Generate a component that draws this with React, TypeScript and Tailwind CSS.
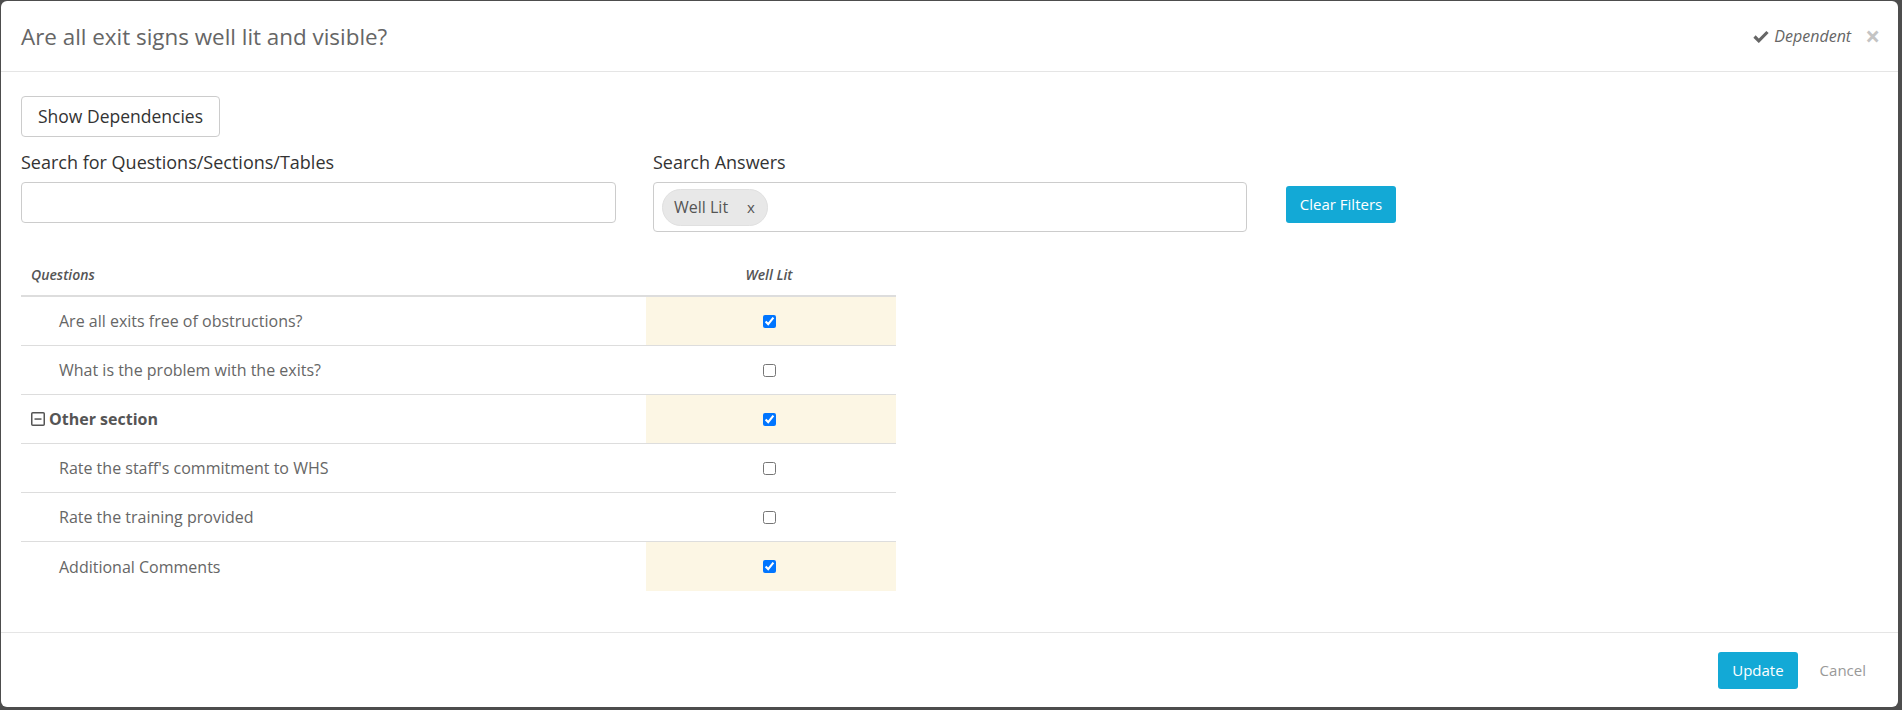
import { useState } from "react";

type Row = { label: string; checked: boolean; section?: boolean };

const rows: Row[] = [
  { label: "Are all exits free of obstructions?", checked: true },
  { label: "What is the problem with the exits?", checked: false },
  { label: "Other section", checked: true, section: true },
  { label: "Rate the staff's commitment to WHS", checked: false },
  { label: "Rate the training provided", checked: false },
  { label: "Additional Comments", checked: true },
];

export default function App() {
  const [items, setItems] = useState(rows);

  const toggle = (i: number) => {
    setItems(items.map((r, idx) => (idx === i ? { ...r, checked: !r.checked } : r)));
  };

  return (
    <div className="min-h-[710px] bg-[#4d4d4d] pt-[1px] pl-[1px] font-['Open_Sans',sans-serif]">
      <div className="w-[1897px] h-[706px] bg-white rounded-[6px] flex flex-col">
        {/* header */}
        <div className="h-[71px] border-b border-[#e5e5e5] flex items-center justify-between pl-[20px] pr-[18px] shrink-0">
          <h4 className="text-[22.4px] text-[#666] mt-[2px]">Are all exit signs well lit and visible?</h4>
          <div className="flex items-center gap-[14px]">
            <span className="flex items-center gap-[5px] text-[16px] italic text-[#666]">
              <svg width="16" height="13" viewBox="0 0 16 13">
                <path d="M1.5 6.5 L5.8 10.8 L14.5 2" fill="none" stroke="#666" strokeWidth="3.2" />
              </svg>
              Dependent
            </span>
            <span className="text-[26px] leading-none text-[#c4c4c4] font-bold">×</span>
          </div>
        </div>

        {/* body */}
        <div className="flex-1 px-[20px] pt-[24px]">
          <button className="h-[41px] px-[16px] border border-[#ccc] rounded-[4px] text-[17.5px] text-[#333] bg-white">
            Show Dependencies
          </button>

          <div className="flex items-start mt-[12px]">
            <div className="w-[595px]">
              <label className="block text-[18px] text-[#333] leading-[26px] mb-[7px]">
                Search for Questions/Sections/Tables
              </label>
              <input className="w-full h-[41px] border border-[#ccc] rounded-[4px] px-3 outline-none" />
            </div>
            <div className="w-[594px] ml-[37px]">
              <label className="block text-[18px] text-[#333] leading-[26px] mb-[7px]">Search Answers</label>
              <div className="h-[50px] border border-[#ccc] rounded-[4px] flex items-center px-[8px]">
                <span className="h-[37px] rounded-full bg-[#e8e8e8] border border-[#e0e0e0] flex items-center pl-[11px] pr-[12px] text-[16px] text-[#555]">
                  Well Lit
                  <span className="ml-[19px] text-[15px]">x</span>
                </span>
              </div>
            </div>
            <button className="ml-[39px] mt-[37px] h-[37px] w-[110px] rounded-[3px] bg-[#13a9d6] text-white text-[15px]">
              Clear Filters
            </button>
          </div>

          {/* table */}
          <div className="w-[875px] mt-[18px]">
            <div className="flex h-[47px] items-end pb-[10px] border-b-2 border-[#ddd] text-[14px] italic font-semibold text-[#555]">
              <div className="w-[625px] pl-[10px]">Questions</div>
              <div className="w-[250px] text-center pr-[4px]">Well Lit</div>
            </div>
            {items.map((r, i) => (
              <div key={i} className={"flex h-[49px] " + (i < items.length - 1 ? "border-b border-[#ddd]" : "")}>
                <div className="w-[625px] flex items-center">
                  {r.section ? (
                    <span className="flex items-center pl-[10px] text-[16px] font-bold text-[#555]">
                      <svg width="14" height="14" viewBox="0 0 14 14" className="mr-[4px]">
                        <rect x="0.75" y="0.75" width="12.5" height="12.5" rx="1" fill="none" stroke="#555" strokeWidth="1.5" />
                        <rect x="3.5" y="6.3" width="7" height="1.5" fill="#555" />
                      </svg>
                      {r.label}
                    </span>
                  ) : (
                    <span className="pl-[38px] text-[16px] text-[#666]">{r.label}</span>
                  )}
                </div>
                <div
                  className={
                    "w-[250px] flex items-center justify-center pr-[4px] " + (r.checked ? "bg-[#fcf6e4]" : "")
                  }
                >
                  <input type="checkbox" checked={r.checked} onChange={() => toggle(i)} className="w-[13px] h-[13px]" />
                </div>
              </div>
            ))}
          </div>
        </div>

        {/* footer */}
        <div className="h-[75px] border-t border-[#e5e5e5] flex items-center justify-end pr-[32px] shrink-0">
          <button className="h-[37px] px-[14px] rounded-[3px] bg-[#13a9d6] text-white text-[15px]">Update</button>
          <button className="ml-[22px] text-[15px] text-[#999]">Cancel</button>
        </div>
      </div>
    </div>
  );
}
